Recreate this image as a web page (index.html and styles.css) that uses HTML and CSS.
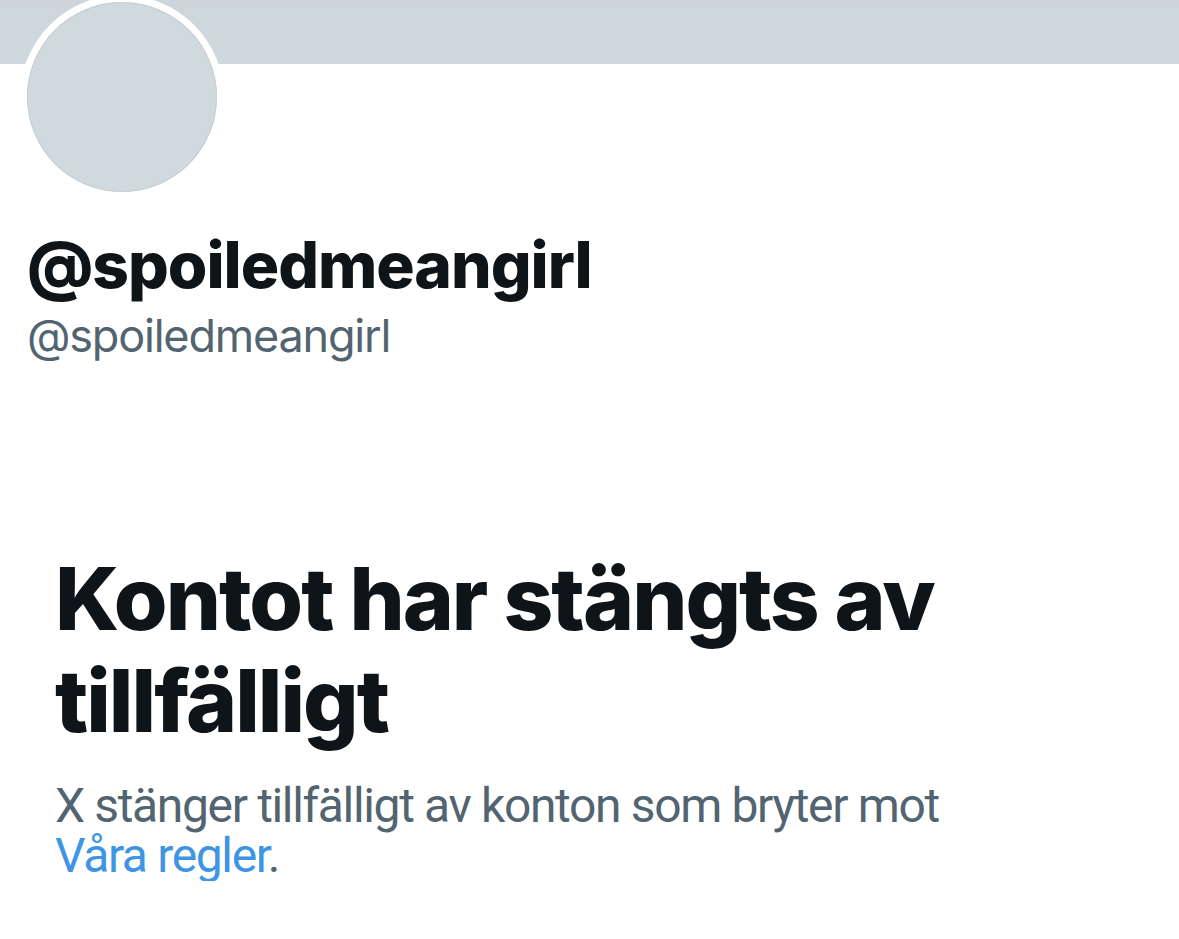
FILE: index.html
```html
<!DOCTYPE html>
<html lang="sv">
<head>
<meta charset="utf-8">
<title>@spoiledmeangirl</title>
<link rel="stylesheet" href="styles.css">
</head>
<body>
<div class="banner"></div>
<div class="avatar-ring"><div class="avatar"></div></div>
<div class="names">
  <div class="display-name">@spoiledmeangirl</div>
  <div class="handle">@spoiledmeangirl</div>
</div>
<div class="notice">
  <h1 class="notice-title">Kontot har stängts av tillfälligt</h1>
  <p class="notice-text">X stänger tillfälligt av konton som bryter mot <a class="rules-link" href="#">Våra regler</a>.</p>
</div>
</body>
</html>
```
FILE: styles.css
```css
html, body {
  margin: 0;
  padding: 0;
  background: #ffffff;
  font-family: Inter, "Liberation Sans", sans-serif;
}
.banner {
  height: 64px;
  background: linear-gradient(#cdd5da, #cfd9de);
}
.avatar-ring {
  width: 190px;
  height: 190px;
  margin: -69px 0 0 20px;
  border: 7px solid #ffffff;
  border-radius: 50%;
  background: #ffffff;
}
.avatar {
  width: 100%;
  height: 100%;
  border-radius: 50%;
  background: #cfd9de;
  box-shadow: inset 0 0 0 1px #c5cfd5;
}
.names {
  padding: 31px 0 0 27px;
}
.display-name {
  font-size: 64px;
  font-weight: 800;
  color: #0f1419;
  line-height: 70px;
  letter-spacing: -1px;
}
.handle {
  margin-top: 11px;
  font-size: 45px;
  color: #536471;
  line-height: 50px;
  letter-spacing: -1.2px;
}
.notice {
  padding: 187px 0 0 55px;
  width: 960px;
}
.notice-title {
  width: 900px;
  margin: 0;
  font-size: 87px;
  font-weight: 800;
  line-height: 102px;
  color: #0f1419;
  letter-spacing: -2px;
}
.notice-text {
  margin: 29px 0 0;
  font-family: Roboto, Inter, sans-serif;
  font-size: 48px;
  line-height: 50px;
  color: #536471;
  letter-spacing: -1.35px;
}
.rules-link {
  color: #3d95e3;
  text-decoration: none;
}
```
